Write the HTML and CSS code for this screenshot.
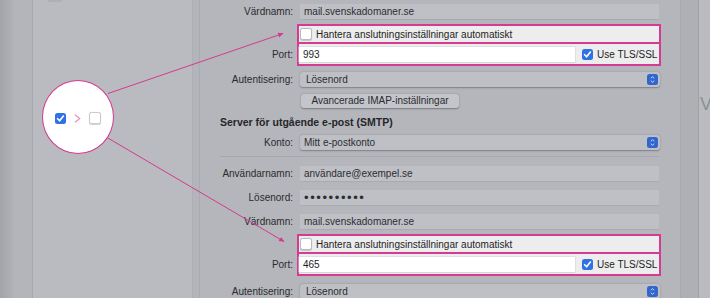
FILE: index.html
```html
<!DOCTYPE html>
<html lang="sv">
<head>
  <meta charset="UTF-8">
  <title>Mail – Konton</title>
  <link rel="stylesheet" href="styles.css">
</head>
<body>
  <div class="window">
    <div class="edge"></div>
    <div class="strip"></div>
    <aside class="sidebar"><span class="stub"></span></aside>
    <div class="gutter"></div>

    <main class="panel">
      <!-- inkommande server -->
      <div class="row">
        <span class="label">Värdnamn:</span>
        <div class="field">mail.svenskadomaner.se</div>
      </div>

      <div class="hl-group">
        <div class="hl-labels">
          <span class="hl-cell-top"></span>
          <span class="hl-cell-bottom">Port:</span>
        </div>
        <div class="hl">
          <div class="hl-top">
            <span class="box"></span>
            <span>Hantera anslutningsinställningar automatiskt</span>
          </div>
          <div class="hl-bottom">
            <div class="port">993</div>
            <svg class="check" width="11" height="11" viewBox="0 0 11 11"><rect width="11" height="11" rx="2.5" fill="#2f72e6"/><path d="M2.6 5.7 L4.6 7.8 L8.4 3.0" fill="none" stroke="#fff" stroke-width="1.6" stroke-linecap="round" stroke-linejoin="round"/></svg>
            <span class="nowrap">Use TLS/SSL</span>
          </div>
        </div>
      </div>

      <div class="row gap-6">
        <span class="label">Autentisering:</span>
        <div class="field popup">
          <span class="popup-text">Lösenord</span>
          <svg class="stepper" width="11" height="11" viewBox="0 0 11 11"><rect width="11" height="11" rx="2.5" fill="#3166cf"/><path d="M3.8 4.3 L5.5 2.7 L7.2 4.3 M3.8 6.7 L5.5 8.3 L7.2 6.7" fill="none" stroke="#dfe6f5" stroke-width="0.9"/></svg>
        </div>
      </div>

      <div class="row gap-6">
        <span class="label"></span>
        <button class="btn">Avancerade IMAP-inställningar</button>
      </div>

      <!-- utgående server -->
      <h2 class="heading">Server för utgående e-post (SMTP)</h2>

      <div class="row gap-7">
        <span class="label">Konto:</span>
        <div class="field popup">
          <span>Mitt e-postkonto</span>
          <svg class="stepper" width="11" height="11" viewBox="0 0 11 11"><rect width="11" height="11" rx="2.5" fill="#3166cf"/><path d="M3.8 4.3 L5.5 2.7 L7.2 4.3 M3.8 6.7 L5.5 8.3 L7.2 6.7" fill="none" stroke="#dfe6f5" stroke-width="0.9"/></svg>
        </div>
      </div>

      <hr class="sep">

      <div class="row gap-9">
        <span class="label">Användarnamn:</span>
        <div class="field">användare@exempel.se</div>
      </div>
      <div class="row gap-9">
        <span class="label">Lösenord:</span>
        <div class="field dots">••••••••••</div>
      </div>
      <div class="row gap-9">
        <span class="label">Värdnamn:</span>
        <div class="field">mail.svenskadomaner.se</div>
      </div>

      <div class="hl-group gap-3">
        <div class="hl-labels">
          <span class="hl-cell-top"></span>
          <span class="hl-cell-bottom">Port:</span>
        </div>
        <div class="hl">
          <div class="hl-top">
            <span class="box"></span>
            <span>Hantera anslutningsinställningar automatiskt</span>
          </div>
          <div class="hl-bottom">
            <div class="port">465</div>
            <svg class="check" width="11" height="11" viewBox="0 0 11 11"><rect width="11" height="11" rx="2.5" fill="#2f72e6"/><path d="M2.6 5.7 L4.6 7.8 L8.4 3.0" fill="none" stroke="#fff" stroke-width="1.6" stroke-linecap="round" stroke-linejoin="round"/></svg>
            <span class="nowrap">Use TLS/SSL</span>
          </div>
        </div>
      </div>

      <div class="row gap-8">
        <span class="label">Autentisering:</span>
        <div class="field popup">
          <span class="popup-text">Lösenord</span>
          <svg class="stepper" width="11" height="11" viewBox="0 0 11 11"><rect width="11" height="11" rx="2.5" fill="#3166cf"/><path d="M3.8 4.3 L5.5 2.7 L7.2 4.3 M3.8 6.7 L5.5 8.3 L7.2 6.7" fill="none" stroke="#dfe6f5" stroke-width="0.9"/></svg>
        </div>
      </div>
    </main>

    <div class="rstrip"></div>
    <div class="next"><span>Vä</span></div>

    <!-- förklaring: kryssrutan ska avmarkeras -->
    <svg class="arrows" width="710" height="298" viewBox="0 0 710 298">
      <defs>
        <marker id="tip" markerWidth="6" markerHeight="6" refX="5" refY="3" orient="auto" markerUnits="userSpaceOnUse">
          <path d="M0 0.6 L5.5 3 L0 5.4 Z" fill="#d6398f"/>
        </marker>
      </defs>
      <line x1="108" y1="93.5" x2="283" y2="33.5" stroke="#d6398f" stroke-width="1" marker-end="url(#tip)"/>
      <line x1="107" y1="137.5" x2="284" y2="241.5" stroke="#d6398f" stroke-width="1" marker-end="url(#tip)"/>
    </svg>

    <div class="callout">
      <svg width="11" height="11" viewBox="0 0 11 11"><rect width="11" height="11" rx="2.5" fill="#2f72e6"/><path d="M2.6 5.7 L4.6 7.8 L8.4 3.0" fill="none" stroke="#fff" stroke-width="1.6" stroke-linecap="round" stroke-linejoin="round"/></svg>
      <svg width="7" height="9" viewBox="0 0 7 9"><path d="M1 0.8 L5.8 4.5 L1 8.2" fill="none" stroke="#e58cbd" stroke-width="1.1"/></svg>
      <span class="box"></span>
    </div>
  </div>
</body>
</html>
```

FILE: styles.css
```css
body {
  margin: 0;
  width: 710px;
  height: 298px;
  overflow: hidden;
  font-family: "Liberation Sans", Arial, sans-serif;
  font-size: 10px;
  color: #2a2b2e;
  background: #b4b6bb;
}

.window {
  position: relative;
  display: flex;
  height: 298px;
}

/* fönsterkanter och sidopanel */
.edge {
  width: 13px;
  background: linear-gradient(to right, #a2a4a8, #afb1b6);
}

.strip {
  width: 19px;
  background: #b3b5ba;
  border-right: 1px solid #a6a8ad;
}

.sidebar {
  position: relative;
  width: 159px;
  background: #b9bbc1;
  border-right: 1px solid #aeb0b5;
}

.stub {
  position: absolute;
  left: 14px;
  top: -4px;
  width: 16px;
  height: 6px;
  border-radius: 3px;
  background: #aeb0b5;
}

.gutter {
  width: 6px;
  background: #b3b5ba;
  border-right: 1px solid #a9abb0;
}

.panel {
  width: 480px;
  padding: 4px 21px 0 0;
  box-sizing: border-box;
  background: #b4b6bb;
}

.rstrip {
  width: 17px;
  background: #aeb0b4;
  border-left: 1px solid #a7a9ad;
}

.next {
  width: 11px;
  overflow: hidden;
  background: #b9bbc0;
  border-left: 1px solid #a0a2a6;
}

.next span {
  display: block;
  padding: 95px 0 0 1px;
  font-size: 18px;
  line-height: 18px;
  color: #8d8f93;
  white-space: nowrap;
}

/* formulärrader */
.row {
  display: flex;
  align-items: center;
  height: 15px;
}

.gap-3 { margin-top: 3px; }
.gap-6 { margin-top: 6px; }
.gap-7 { margin-top: 7px; }
.gap-8 { margin-top: 8px; }
.gap-9 { margin-top: 9px; }

.label {
  flex-shrink: 0;
  width: 93px;
  text-align: right;
}

.field {
  flex: 1;
  height: 15px;
  line-height: 15px;
  margin-left: 7px;
  padding-left: 4px;
  background: #bec0c6;
  box-shadow: 0 1px 0 #a9abb0;
  color: #2c2d30;
}

.popup {
  display: flex;
  align-items: center;
  justify-content: space-between;
  margin-right: -1px;
  border-radius: 3px;
  box-shadow: 0 0.5px 1.5px rgba(60, 62, 66, 0.45);
}

.popup-text {
  padding-left: 2px;
}

.stepper {
  margin-right: 2px;
}

.dots {
  font-size: 13px;
  letter-spacing: 1.6px;
  line-height: 15px;
}

.btn {
  margin-left: 8px;
  width: 158px;
  height: 14px;
  padding: 0;
  border: none;
  border-radius: 3px;
  font-family: inherit;
  font-size: 10px;
  color: #2a2b2e;
  background: #c3c5ca;
  box-shadow: 0 0.5px 1.5px rgba(60, 62, 66, 0.5);
}

.heading {
  margin: 8px 0 0 20px;
  font-size: 10.5px;
  line-height: 12px;
  font-weight: bold;
  color: #252629;
}

.sep {
  margin: 6px 0 0 20px;
  border: none;
  border-top: 1px solid #a6a8ad;
}

/* markerade rutor */
.hl-group {
  display: flex;
  margin-top: 5px;
}

.hl-labels {
  display: flex;
  flex-direction: column;
  flex-shrink: 0;
  width: 93px;
  text-align: right;
}

.hl-cell-top {
  height: 19px;
}

.hl-cell-bottom {
  height: 23px;
  line-height: 23px;
}

.hl {
  flex: 1;
  margin: 0 -2px 0 4px;
  border: 2px solid #d53b92;
  background: #ededee;
  color: #1e1e1f;
}

.hl-top {
  display: flex;
  align-items: center;
  gap: 4px;
  height: 16px;
  padding-left: 1px;
  border-bottom: 2px solid #d53b92;
}

.hl-bottom {
  display: flex;
  align-items: center;
  height: 20px;
  padding-right: 2px;
}

.port {
  flex-shrink: 0;
  width: 272px;
  height: 15px;
  line-height: 15px;
  padding-left: 4px;
  background: #fff;
  box-shadow: 0 0 0 0.5px #d4d4d6, 0 1px 1px rgba(0, 0, 0, 0.08);
}

.check {
  flex-shrink: 0;
  margin: 0 4px 0 7px;
}

.nowrap {
  white-space: nowrap;
}

.box {
  display: inline-block;
  flex-shrink: 0;
  width: 10px;
  height: 10px;
  border: 0.5px solid #b9b9bb;
  border-radius: 2.5px;
  background: #fff;
  box-shadow: 0 0.5px 1px rgba(0, 0, 0, 0.18);
}

/* förklaringscirkel */
.arrows {
  position: absolute;
  left: 0;
  top: 0;
  pointer-events: none;
}

.callout {
  position: absolute;
  left: 42px;
  top: 80px;
  width: 70px;
  height: 70px;
  border: 1px solid #d6398f;
  border-radius: 50%;
  background: #fff;
  display: flex;
  align-items: center;
  justify-content: center;
  gap: 8px;
  padding-top: 2px;
  box-sizing: content-box;
}

.callout .box {
  width: 10px;
  height: 10px;
  border-color: #c9c9cb;
}
```
